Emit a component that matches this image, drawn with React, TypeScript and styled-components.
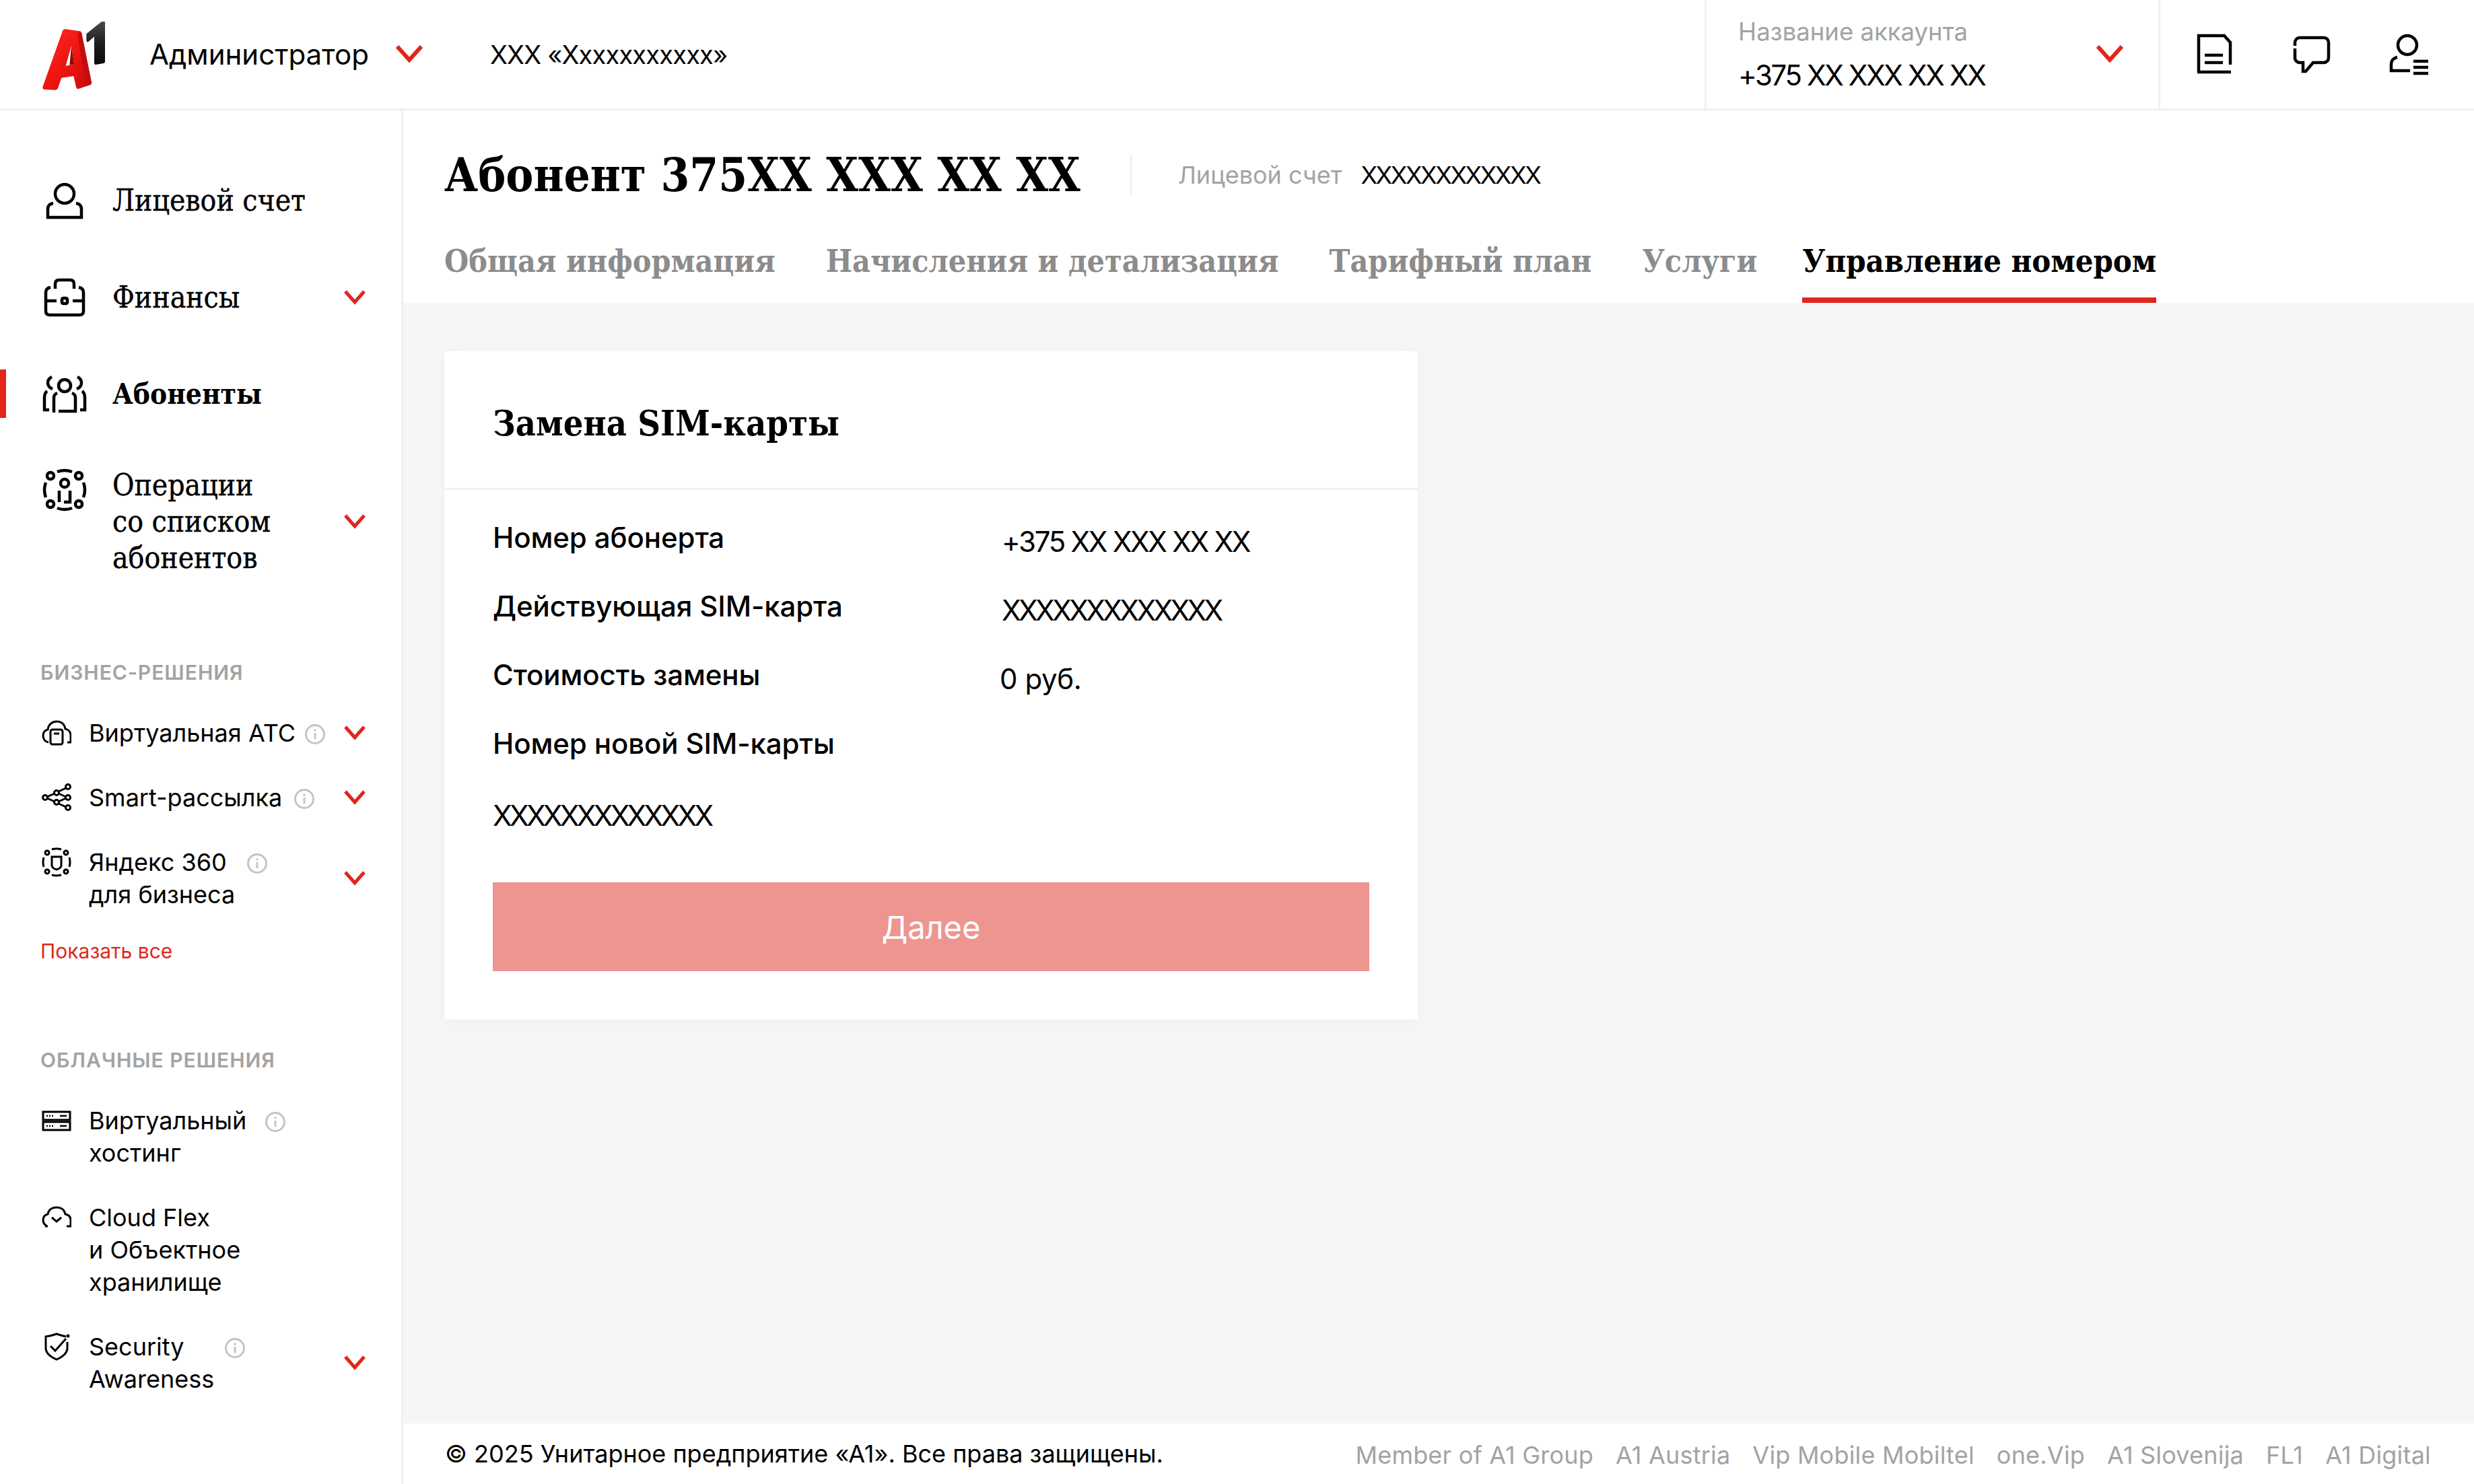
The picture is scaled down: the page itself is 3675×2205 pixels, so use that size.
import React from "react";
import styled, { createGlobalStyle } from "styled-components";

const sans = `Inter, "Noto Sans", sans-serif`;
const slab = `"DejaVu Serif Condensed", "DejaVu Serif", "Liberation Serif", serif`;
const red = "#e1261c";

const GlobalStyle = createGlobalStyle`
  html, body { margin: 0; padding: 0; background: #fff; }
  body { font-family: ${sans}; color: #000; }
`;

const Page = styled.div`
  width: 3675px;
  height: 2205px;
  display: flex;
  flex-direction: column;
  overflow: hidden;
`;

const Header = styled.header`
  height: 164px;
  box-sizing: border-box;
  border-bottom: 3px solid #f0f0f0;
  display: flex;
  align-items: stretch;
  padding-left: 50px;
`;

const LogoBox = styled.div`
  display: flex;
  align-items: center;
  margin-right: 52px;
`;

const HeaderText = styled.div`
  display: flex;
  align-items: center;
  font-size: 42px;
`;

const OrgText = styled(HeaderText)`
  font-size: 38px;
  letter-spacing: -0.8px;
  margin-left: 100px;
`;

const ChevronBox = styled.div<{ $size: number }>`
  display: flex;
  align-items: center;
  justify-content: center;
  width: ${(p) => p.$size}px;
`;

const HeaderChevron = styled(ChevronBox)`
  margin-left: 40px;
`;

const AccountBox = styled.div`
  margin-left: auto;
  width: 677px;
  box-sizing: border-box;
  border-left: 3px solid #f0f0f0;
  border-right: 3px solid #f0f0f0;
  padding: 0 52px 0 47px;
  display: flex;
  align-items: center;
  justify-content: space-between;
`;

const AccountLabel = styled.div`
  font-size: 36.5px;
  line-height: 44px;
  color: #a3a3a3;
  margin-bottom: 18px;
`;

const AccountNumber = styled.div`
  font-size: 42px;
  line-height: 50px;
  letter-spacing: -2.4px;
`;

const HeaderIcons = styled.div`
  display: flex;
  align-items: center;
  gap: 85px;
  padding: 0 66px 0 50px;
`;

const Body = styled.div`
  flex: 1;
  display: flex;
  min-height: 0;
`;

const Sidebar = styled.aside`
  width: 599px;
  flex: none;
  box-sizing: border-box;
  border-right: 3px solid #f0f0f0;
  padding-top: 107px;
  display: flex;
  flex-direction: column;
`;

const NavList = styled.nav`
  display: flex;
  flex-direction: column;
  gap: 90px;
`;

const NavItem = styled.div<{ $active?: boolean }>`
  position: relative;
  display: flex;
  align-items: flex-start;
  padding: 0 53px 0 64px;
  font-family: ${slab};
  font-size: ${(p) => (p.$active ? 42 : 44)}px;
  line-height: 54px;
  font-weight: ${(p) => (p.$active ? 700 : 400)};
  -webkit-text-stroke: ${(p) => (p.$active ? 0 : 0.4)}px #000;
  &::before {
    content: "";
    display: ${(p) => (p.$active ? "block" : "none")};
    position: absolute;
    left: 0;
    top: -10px;
    width: 9px;
    height: 72px;
    background: ${red};
  }
`;

const OpsItem = styled(NavItem)`
  margin-top: -9px;
`;

const NavIcon = styled.div`
  width: 64px;
  height: 54px;
  flex: none;
  display: flex;
  align-items: center;
  margin-right: 39px;
  svg {
    overflow: visible;
    flex: none;
  }
`;

const NavLabel = styled.div`
  flex: 1;
`;

const SideChevron = styled(ChevronBox)`
  align-self: center;
`;

const SectionTitle = styled.div<{ $top: number }>`
  margin: ${(p) => p.$top}px 0 0 60px;
  font-size: 30px;
  line-height: 40px;
  font-weight: 600;
  letter-spacing: 1px;
  color: #a3a3a3;
`;

const SubList = styled.div`
  display: flex;
  flex-direction: column;
  gap: 48px;
  margin-top: 46px;
`;

const SubItem = styled.div`
  display: flex;
  align-items: flex-start;
  padding: 0 53px 0 62px;
  font-size: 36px;
  line-height: 48px;
`;

const SubIcon = styled.div`
  width: 44px;
  height: 48px;
  flex: none;
  display: flex;
  align-items: center;
  margin-right: 26px;
`;

const SubLabel = styled.div`
  flex: 1;
`;

const InfoMark = styled.span<{ $gap: number }>`
  display: inline-block;
  vertical-align: -4px;
  margin-left: ${(p) => p.$gap}px;
  width: 30px;
  height: 30px;
`;

const ShowAll = styled.div`
  margin: 40px 0 0 60px;
  font-size: 30px;
  line-height: 40px;
  color: ${red};
`;

const Main = styled.main`
  flex: 1;
  display: flex;
  flex-direction: column;
  min-width: 0;
`;

const TopPanel = styled.div`
  height: 286px;
  box-sizing: border-box;
  padding: 50px 0 0 61px;
  display: flex;
  flex-direction: column;
`;

const TitleRow = styled.div`
  display: flex;
  align-items: center;
  height: 92px;
`;

const PageTitle = styled.h1`
  margin: 0;
  font-family: ${slab};
  font-size: 68.5px;
  font-weight: 700;
`;

const AccountMeta = styled.div`
  margin-left: 74px;
  padding-left: 68px;
  border-left: 3px solid #f0f0f0;
  height: 60px;
  display: flex;
  align-items: center;
  gap: 28px;
  font-size: 36px;
`;

const MetaLabel = styled.span`
  color: #a3a3a3;
`;

const MetaValue = styled.span`
  letter-spacing: -2.4px;
`;

const Tabs = styled.div`
  margin-top: auto;
  display: flex;
  gap: 75px;
`;

const Tab = styled.div<{ $active?: boolean }>`
  font-family: ${slab};
  font-size: ${(p) => (p.$active ? 46.7 : 46.2)}px;
  font-weight: 700;
  line-height: 60px;
  padding-bottom: 24px;
  margin-left: ${(p) => (p.$active ? -8 : 0)}px;
  color: ${(p) => (p.$active ? "#000" : "#8c8c8c")};
  border-bottom: 8px solid ${(p) => (p.$active ? red : "transparent")};
`;

const Content = styled.div`
  flex: 1;
  background: #f6f6f6;
  padding: 72px 0 0 61px;
`;

const Card = styled.section`
  width: 1446px;
  background: #fff;
  box-shadow: 0 4px 24px rgba(0, 0, 0, 0.03);
`;

const CardTitle = styled.h2`
  margin: 0;
  height: 206px;
  box-sizing: border-box;
  border-bottom: 3px solid #f0f0f0;
  padding: 10px 0 0 72px;
  display: flex;
  align-items: center;
  font-family: ${slab};
  font-size: 52px;
  font-weight: 700;
`;

const CardBody = styled.div`
  padding: 20px 72px 72px;
`;

const InfoRow = styled.div`
  height: 102px;
  display: flex;
  align-items: center;
`;

const RowLabel = styled.div`
  width: 756px;
  margin-top: -2px;
  font-size: 42px;
  font-weight: 500;
  letter-spacing: -0.1px;
`;

const RowValue = styled.div`
  font-size: 42px;
  margin-top: 10px;
  letter-spacing: -2.3px;
`;

const SerialValue = styled(RowValue)`
  letter-spacing: -3.6px;
`;

const CostValue = styled(RowValue)`
  letter-spacing: -0.4px;
  margin-left: -3px;
`;

const SimValue = styled.div`
  margin-top: 29px;
  font-size: 42px;
  line-height: 54px;
  letter-spacing: -3.7px;
`;

const NextButton = styled.button`
  width: 100%;
  height: 132px;
  margin-top: 72px;
  border: 0;
  background: #ee9590;
  color: #fff;
  font-family: ${sans};
  font-size: 47px;
`;

const Footer = styled.footer`
  height: 90px;
  display: flex;
  align-items: center;
  justify-content: space-between;
  padding: 0 64px 0 62px;
  font-size: 36px;
`;

const FooterLinks = styled.div`
  display: flex;
  gap: 33px;
  margin-top: 3px;
  color: #a3a3a3;
  letter-spacing: 0.2px;
`;

const Chevron = ({ w, h, sw }: { w: number; h: number; sw: number }) => (
  <svg width={w} height={h + sw} viewBox={`0 0 ${w} ${h + sw}`} fill="none">
    <path d={`M2 2 L${w / 2} ${h} L${w - 2} 2`} stroke={red} strokeWidth={sw} />
  </svg>
);

const Logo = () => (
  <svg width="120" height="120" viewBox="0 0 360 360">
    <defs>
      <linearGradient id="aRed" x1="0" y1="0" x2="1" y2="1">
        <stop offset="0" stopColor="#ff2a22" />
        <stop offset="0.55" stopColor="#ee1410" />
        <stop offset="1" stopColor="#c50a0a" />
      </linearGradient>
      <linearGradient id="oneDark" x1="0" y1="0" x2="0" y2="1">
        <stop offset="0" stopColor="#4a4a4a" />
        <stop offset="0.5" stopColor="#1e1e1e" />
        <stop offset="1" stopColor="#0c0c0c" />
      </linearGradient>
    </defs>
    <path d="M40 325 L130 72 Q133 66 142 67 L206 76 Q212 78 214 86 L258 305 Q259 313 250 316 L200 333 Q192 335 190 328 L178 276 L124 284 L108 330 Q105 338 96 338 L48 336 Q38 335 40 325 Z M168 142 L143 230 L181 224 Z" fill="url(#aRed)" fillRule="evenodd" />
    <path d="M168 142 L181 224 L160 227 Z" fill="#8d0a0c" />
    <path d="M206 76 Q212 78 214 86 L258 305 Q259 313 250 316 L232 322 L196 90 Z" fill="#c20e10" />
    <path d="M235 88 L300 35 Q306 32 318 34 L318 212 Q318 218 312 219 L278 225 Q270 226 270 218 L270 100 L245 122 Q236 128 235 118 Z" fill="url(#oneDark)" />
  </svg>
);

const IconDoc = () => (
  <svg width="60" height="70" viewBox="0 0 60 70" fill="none" stroke="#000" strokeWidth="4.5">
    <path d="M7 61 V7 H45 L54 17 V50" />
    <path d="M5 61 H55 M16 36 H43 M16 47 H43" />
  </svg>
);

const IconBubble = () => (
  <svg width="60" height="70" viewBox="0 0 60 70" fill="none" stroke="#000" strokeWidth="4.5">
    <path d="M5 22 V17 a7 7 0 0 1 7 -7 H48 a7 7 0 0 1 7 7 V40 a7 7 0 0 1 -7 7 H32 L21 60 H17 V47 H12 a7 7 0 0 1 -7 -7 V26" />
  </svg>
);

const IconUserList = () => (
  <svg width="60" height="70" viewBox="0 0 60 70" fill="none" stroke="#000" strokeWidth="4.5">
    <circle cx="27" cy="21" r="14" />
    <path d="M12 39 Q3 41 3 50 V59 H31" />
    <path d="M36 45 H58 M36 54 H58 M36 63 H58" />
  </svg>
);

const NavSvg = ({ children }: { children: React.ReactNode }) => (
  <svg width="64" height="64" viewBox="0 0 64 64" fill="none" stroke="#000" strokeWidth="4.5">
    {children}
  </svg>
);

const IconPerson = () => (
  <NavSvg>
    <circle cx="32" cy="22" r="14" />
    <path d="M15 36 Q7 37 7 45 V57 H57 V45 Q57 37 49 36" />
  </NavSvg>
);

const IconCase = () => (
  <NavSvg>
    <path d="M18 19 V12 Q18 6 24 6 H40 Q46 6 46 12 V19" />
    <path d="M11 17 Q4 18 4 25 V52 Q4 58 10 58 H54 Q60 58 60 52 V25 Q60 18 53 17" />
    <path d="M4 37 H20 M44 37 H60" />
    <rect x="28" y="33" width="8" height="8" rx="2" />
  </NavSvg>
);

const IconGroup = () => (
  <NavSvg>
    <circle cx="32" cy="19" r="9" />
    <path d="M13 6 Q7 9 7 15 Q7 21 14 24 M51 6 Q57 9 57 15 Q57 21 50 24" />
    <path d="M16 59 V37 Q16 32 21 30 M43 30 Q48 32 48 37 V57 H23" />
    <path d="M6 27 Q2 30 2 37 V55 H9 M58 27 Q62 30 62 37 V55 H55" />
  </NavSvg>
);

const IconOps = () => (
  <NavSvg>
    <g transform="translate(0 7)">
      <circle cx="11" cy="11" r="5" />
      <circle cx="53" cy="11" r="5" />
      <circle cx="11" cy="53" r="5" />
      <circle cx="53" cy="53" r="5" />
      <circle cx="32" cy="22" r="6" />
      <path d="M24 33 V50 M40 33 V50 H31" />
      <path d="M21 5 Q32 1 43 5 M21 59 Q32 63 43 59 M4 21 Q0 32 4 43 M60 21 Q64 32 60 43" />
    </g>
  </NavSvg>
);

const SubSvg = ({ children }: { children: React.ReactNode }) => (
  <svg width="44" height="44" viewBox="0 0 44 44" fill="none" stroke="#000" strokeWidth="3">
    {children}
  </svg>
);

const IconCloudSim = () => (
  <SubSvg>
    <path d="M10 36 C5 35 2 31 2 26 C2 21 5 18 9 17 C10 9 16 5 22 5 C29 5 34 9 35 16 C40 17 43 21 43 26 V36 H38" />
    <rect x="13" y="17" width="18" height="22" rx="3" />
    <path d="M18 23 H26" />
  </SubSvg>
);

const IconNetwork = () => (
  <SubSvg>
    <circle cx="5" cy="22" r="3.5" />
    <circle cx="22" cy="15" r="3.5" />
    <circle cx="22" cy="29" r="3.5" />
    <circle cx="39" cy="6" r="3.5" />
    <circle cx="39" cy="22" r="3.5" />
    <circle cx="39" cy="37" r="3.5" />
    <path d="M8 21 L19 16 M8 23 L19 28 M25 13 L36 8 M25 16 L36 21 M25 28 L36 23 M25 31 L36 36" />
  </SubSvg>
);

const IconYandex = () => (
  <SubSvg>
    <circle cx="8" cy="8" r="3" />
    <circle cx="36" cy="8" r="3" />
    <circle cx="8" cy="36" r="3" />
    <circle cx="36" cy="36" r="3" />
    <path d="M15 14 H29 V27 Q29 31 22 33 Q15 31 15 27 Z" />
    <path d="M15 3 Q22 1 29 3 M15 41 Q22 43 29 41 M3 15 Q1 22 3 29 M41 15 Q43 22 41 29" />
  </SubSvg>
);

const IconServer = () => (
  <SubSvg>
    <rect x="2" y="9" width="40" height="12" />
    <rect x="2" y="24" width="40" height="12" />
    <path d="M7 15 H9 M11 15 H13 M15 15 H17 M27 15 H37 M7 30 H9 M11 30 H13 M15 30 H17 M27 30 H37" strokeWidth="2.5" />
  </SubSvg>
);

const IconCloudCheck = () => (
  <SubSvg>
    <path d="M5 35 H9 M7 34 C3 32 2 29 2 26 C2 21 5 18 9 17 C10 11 15 7 22 7 C29 7 34 11 35 17 C40 18 43 21 43 26 V35 H37" />
    <path d="M15 22 L22 28 L29 22" />
  </SubSvg>
);

const IconShield = () => (
  <SubSvg>
    <path d="M36 7 Q28 5 22 3 Q14 6 6 7 V24 Q6 34 22 41 Q38 34 38 24 V15" />
    <path d="M13 21 L20 28 L36 10" />
    <circle cx="39" cy="6" r="1" />
  </SubSvg>
);

const Info = ({ gap }: { gap: number }) => (
  <InfoMark $gap={gap}>
    <svg width="30" height="30" viewBox="0 0 30 30" fill="none">
      <circle cx="15" cy="15" r="13.5" stroke="#c4c4c4" strokeWidth="3" />
      <path d="M15 13 V22" stroke="#c4c4c4" strokeWidth="3" />
      <circle cx="15" cy="9" r="1.7" fill="#c4c4c4" />
    </svg>
  </InfoMark>
);

const MainChevron = () => (
  <SideChevron $size={32}>
    <Chevron w={32} h={18} sw={5} />
  </SideChevron>
);

const App = () => {
  return (
    <>
      <GlobalStyle />
      <Page>
        <Header>
          <LogoBox>
            <Logo />
          </LogoBox>
          <HeaderText>Администратор</HeaderText>
          <HeaderChevron $size={40}>
            <Chevron w={40} h={22} sw={6} />
          </HeaderChevron>
          <OrgText>ХХХ «Ххххххххххх»</OrgText>
          <AccountBox>
            <div>
              <AccountLabel>Название аккаунта</AccountLabel>
              <AccountNumber>+375 XX XXX XX XX</AccountNumber>
            </div>
            <ChevronBox $size={40}>
              <Chevron w={40} h={22} sw={6} />
            </ChevronBox>
          </AccountBox>
          <HeaderIcons>
            <IconDoc />
            <IconBubble />
            <IconUserList />
          </HeaderIcons>
        </Header>
        <Body>
          <Sidebar>
            <NavList>
              <NavItem>
                <NavIcon><IconPerson /></NavIcon>
                <NavLabel>Лицевой счет</NavLabel>
              </NavItem>
              <NavItem>
                <NavIcon><IconCase /></NavIcon>
                <NavLabel>Финансы</NavLabel>
                <MainChevron />
              </NavItem>
              <NavItem $active>
                <NavIcon><IconGroup /></NavIcon>
                <NavLabel>Абоненты</NavLabel>
              </NavItem>
              <OpsItem>
                <NavIcon><IconOps /></NavIcon>
                <NavLabel>
                  Операции
                  <br />
                  со списком
                  <br />
                  абонентов
                </NavLabel>
                <MainChevron />
              </OpsItem>
            </NavList>
            <SectionTitle $top={123}>БИЗНЕС-РЕШЕНИЯ</SectionTitle>
            <SubList>
              <SubItem>
                <SubIcon><IconCloudSim /></SubIcon>
                <SubLabel>Виртуальная АТС<Info gap={14} /></SubLabel>
                <MainChevron />
              </SubItem>
              <SubItem>
                <SubIcon><IconNetwork /></SubIcon>
                <SubLabel>Smart-рассылка<Info gap={18} /></SubLabel>
                <MainChevron />
              </SubItem>
              <SubItem>
                <SubIcon><IconYandex /></SubIcon>
                <SubLabel>
                  Яндекс 360<Info gap={30} />
                  <br />
                  для бизнеса
                </SubLabel>
                <MainChevron />
              </SubItem>
            </SubList>
            <ShowAll>Показать все</ShowAll>
            <SectionTitle $top={122}>ОБЛАЧНЫЕ РЕШЕНИЯ</SectionTitle>
            <SubList>
              <SubItem>
                <SubIcon><IconServer /></SubIcon>
                <SubLabel>
                  Виртуальный<Info gap={28} />
                  <br />
                  хостинг
                </SubLabel>
              </SubItem>
              <SubItem>
                <SubIcon><IconCloudCheck /></SubIcon>
                <SubLabel>
                  Cloud Flex
                  <br />
                  и Объектное
                  <br />
                  хранилище
                </SubLabel>
              </SubItem>
              <SubItem>
                <SubIcon><IconShield /></SubIcon>
                <SubLabel>
                  Security<Info gap={60} />
                  <br />
                  Awareness
                </SubLabel>
                <MainChevron />
              </SubItem>
            </SubList>
          </Sidebar>
          <Main>
            <TopPanel>
              <TitleRow>
                <PageTitle>Абонент 375XX XXX XX XX</PageTitle>
                <AccountMeta>
                  <MetaLabel>Лицевой счет</MetaLabel>
                  <MetaValue>XXXXXXXXXXXX</MetaValue>
                </AccountMeta>
              </TitleRow>
              <Tabs>
                <Tab>Общая информация</Tab>
                <Tab>Начисления и детализация</Tab>
                <Tab>Тарифный план</Tab>
                <Tab>Услуги</Tab>
                <Tab $active>Управление номером</Tab>
              </Tabs>
            </TopPanel>
            <Content>
              <Card>
                <CardTitle>Замена SIM-карты</CardTitle>
                <CardBody>
                  <InfoRow>
                    <RowLabel>Номер абонерта</RowLabel>
                    <RowValue>+375 XX XXX XX XX</RowValue>
                  </InfoRow>
                  <InfoRow>
                    <RowLabel>Действующая SIM-карта</RowLabel>
                    <SerialValue>XXXXXXXXXXXXX</SerialValue>
                  </InfoRow>
                  <InfoRow>
                    <RowLabel>Стоимость замены</RowLabel>
                    <CostValue>0 руб.</CostValue>
                  </InfoRow>
                  <InfoRow>
                    <RowLabel>Номер новой SIM-карты</RowLabel>
                  </InfoRow>
                  <SimValue>XXXXXXXXXXXXX</SimValue>
                  <NextButton>Далее</NextButton>
                </CardBody>
              </Card>
            </Content>
            <Footer>
              <span>© 2025 Унитарное предприятие «А1». Все права защищены.</span>
              <FooterLinks>
                <span>Member of A1 Group</span>
                <span>A1 Austria</span>
                <span>Vip Mobile Mobiltel</span>
                <span>one.Vip</span>
                <span>A1 Slovenija</span>
                <span>FL1</span>
                <span>A1 Digital</span>
              </FooterLinks>
            </Footer>
          </Main>
        </Body>
      </Page>
    </>
  );
};

export default App;
